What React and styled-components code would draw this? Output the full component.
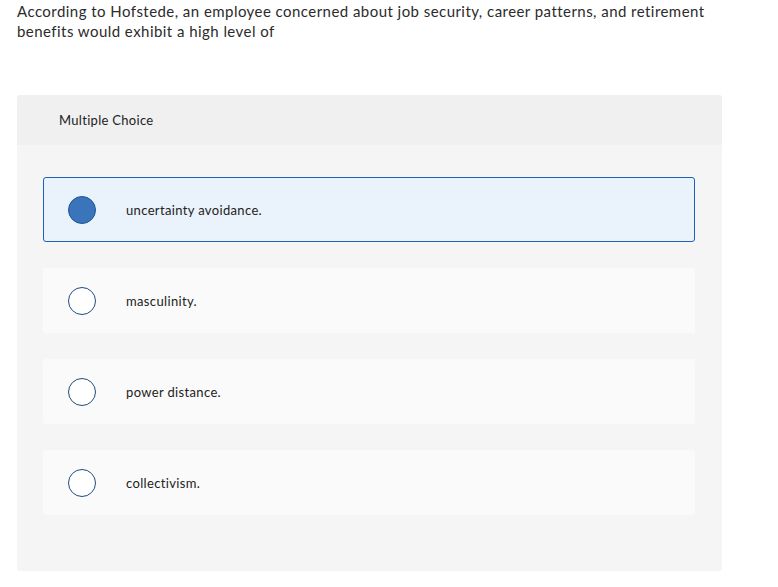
import React from 'react'
import styled, { createGlobalStyle } from 'styled-components'

const Global = createGlobalStyle`
    body {
        margin: 0;
        background: #ffffff;
        font-family: Lato, "Open Sans", "Liberation Sans", sans-serif;
        color: #262626;
    }
`

const Page = styled.div`
    width: 778px;
    padding: 1px 0 0 17px;
    box-sizing: border-box;
`

const Question = styled.p`
    margin: 0;
    width: 720px;
    font-size: 15px;
    line-height: 20px;
    letter-spacing: 0.45px;
    color: #2b2b2b;
`

const Panel = styled.section`
    width: 705px;
    margin-top: 54px;
    background-color: #f5f5f5;
    border-radius: 3px;
    overflow: hidden;
`

const PanelHeader = styled.div`
    height: 50px;
    background-color: #f0f0f0;
    display: flex;
    align-items: center;
    padding-left: 42px;
    font-size: 13px;
    letter-spacing: 0.3px;
    color: #222;
`

const Choices = styled.div`
    display: flex;
    flex-direction: column;
    gap: 26px;
    padding: 32px 27px 56px 26px;
`

const Choice = styled.label`
    height: 65px;
    box-sizing: border-box;
    display: flex;
    align-items: center;
    padding-left: 24px;
    border-radius: 3px;
    background-color: ${p => (p.$selected ? '#eaf2fb' : '#fafafa')};
    border: 1px solid ${p => (p.$selected ? '#1a63b6' : 'transparent')};
    cursor: pointer;
`

const Radio = styled.span`
    width: 28px;
    height: 28px;
    box-sizing: border-box;
    border-radius: 50%;
    border: 1.5px solid ${p => (p.$selected ? '#1d5595' : '#1f4d7d')};
    background-color: ${p => (p.$selected ? '#3a74bb' : '#ffffff')};
    flex-shrink: 0;
`

const ChoiceText = styled.span`
    margin-left: 30px;
    font-size: 13px;
    letter-spacing: 0.35px;
    color: #222;
`

const options = [
    'uncertainty avoidance.',
    'masculinity.',
    'power distance.',
    'collectivism.',
]

export default function App() {
    const selected = 0
    return (
        <Page>
            <Global />
            <Question>
                According to Hofstede, an employee concerned about job security, career patterns, and retirement
                <br />
                benefits would exhibit a high level of
            </Question>
            <Panel>
                <PanelHeader>Multiple Choice</PanelHeader>
                <Choices>
                    {options.map((o, i) => (
                        <Choice key={o} $selected={i === selected}>
                            <Radio $selected={i === selected} />
                            <ChoiceText>{o}</ChoiceText>
                        </Choice>
                    ))}
                </Choices>
            </Panel>
        </Page>
    )
}
